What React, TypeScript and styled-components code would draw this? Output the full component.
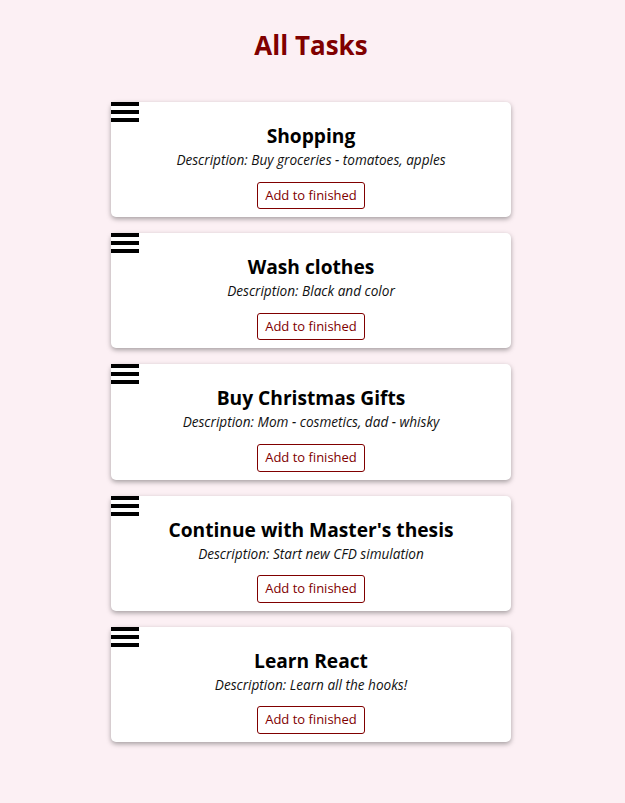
import React from "react";
import styled, { createGlobalStyle } from "styled-components";

const GlobalStyle = createGlobalStyle`
  html, body {
    margin: 0;
    padding: 0;
    background: #fcf0f4;
    font-family: "Open Sans", "Noto Sans", sans-serif;
  }
`;

const Page = styled.main`
  display: flex;
  flex-direction: column;
  align-items: center;
  padding: 27px 3px 40px 0;
`;

const Heading = styled.h1`
  margin: 0 0 39px;
  font-size: 26px;
  font-weight: 700;
  color: #800000;
`;

const List = styled.div`
  display: flex;
  flex-direction: column;
  gap: 16px;
  width: 400px;
`;

const Card = styled.div`
  background: #ffffff;
  border-radius: 5px;
  box-shadow: 0 2px 5px rgba(0, 0, 0, 0.35);
  padding-bottom: 8px;
  display: flex;
  flex-direction: column;
  align-items: center;
`;

const Handle = styled.div`
  align-self: flex-start;
  width: 28px;
  height: 20px;
  display: flex;
  flex-direction: column;
  justify-content: space-between;
  cursor: grab;
`;

const Bar = styled.span`
  display: block;
  height: 4px;
  background: #000;
`;

const Title = styled.h3`
  margin: 0;
  font-size: 19.2px;
  font-weight: 700;
  color: #000;
  line-height: 28px;
`;

const Description = styled.p`
  margin: 0 0 12.5px;
  font-size: 13.6px;
  font-style: italic;
  color: #111;
  line-height: 19px;
`;

const Button = styled.button`
  font-family: inherit;
  font-size: 13px;
  line-height: 17.7px;
  color: #800000;
  background: #fff;
  border: 1px solid #800000;
  border-radius: 3px;
  padding: 4px 7px;
  cursor: pointer;
`;

const tasks = [
  { title: "Shopping", description: "Buy groceries - tomatoes, apples" },
  { title: "Wash clothes", description: "Black and color" },
  { title: "Buy Christmas Gifts", description: "Mom - cosmetics, dad - whisky" },
  { title: "Continue with Master's thesis", description: "Start new CFD simulation" },
  { title: "Learn React", description: "Learn all the hooks!" },
];

export default function App() {
  return (
    <>
      <GlobalStyle />
      <Page>
        <Heading>All Tasks</Heading>
        <List>
          {tasks.map((t) => (
            <Card key={t.title}>
              <Handle>
                <Bar />
                <Bar />
                <Bar />
              </Handle>
              <Title>{t.title}</Title>
              <Description>Description: {t.description}</Description>
              <Button>Add to finished</Button>
            </Card>
          ))}
        </List>
      </Page>
    </>
  );
}
